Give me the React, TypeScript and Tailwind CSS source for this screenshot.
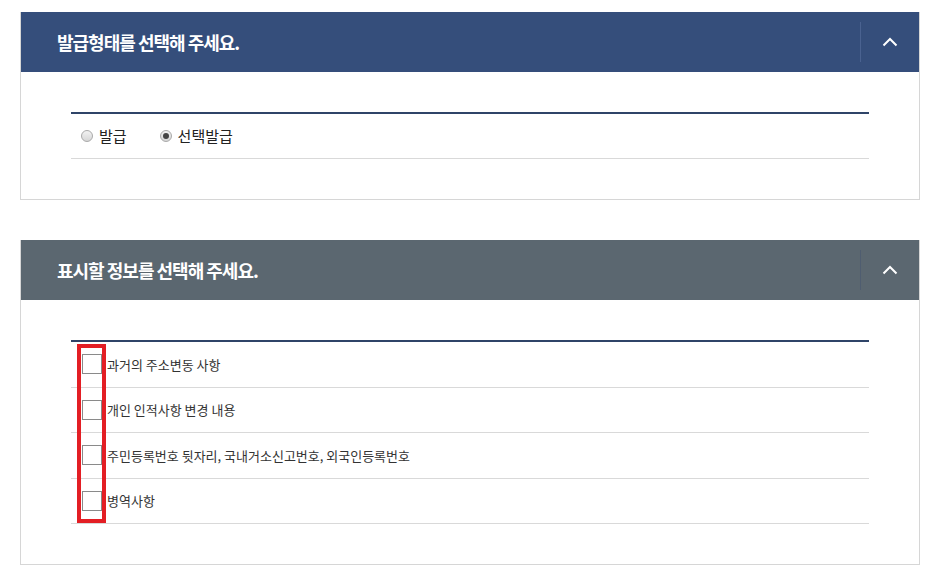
import { useState } from "react";

const font = { fontFamily: '"Noto Sans CJK KR", "Noto Sans", sans-serif' };

function Chevron() {
  return (
    <svg width="16" height="10" viewBox="0 0 16 10" fill="none">
      <path d="M1.5 8.5 L8 2 L14.5 8.5" stroke="white" strokeWidth="2" />
    </svg>
  );
}

function PanelHeader({ title, tone }: { title: string; tone: "navy" | "gray" }) {
  const bg = tone === "navy" ? "bg-[#354e7b]" : "bg-[#5b6770]";
  const line = tone === "navy" ? "bg-[#4a6290]" : "bg-[#4f5d70]";
  return (
    <div className={`flex h-[60px] items-center ${bg}`}>
      <h2 className="flex-1 pl-9 text-[18px] font-bold tracking-[-1px] text-white">{title}</h2>
      <div className={`h-[40px] w-px ${line}`} />
      <button className="flex h-full w-[58px] items-center justify-center">
        <Chevron />
      </button>
    </div>
  );
}

function Radio({ label, checked, onClick }: { label: string; checked: boolean; onClick: () => void }) {
  return (
    <label className="flex cursor-pointer items-center gap-[6px]" onClick={onClick}>
      <span className="flex h-[12px] w-[12px] items-center justify-center rounded-full border border-[#a9a9a9] bg-gradient-to-b from-[#f2f2f2] to-[#d6d6d6]">
        {checked && <span className="h-[6px] w-[6px] rounded-full bg-[#444]" />}
      </span>
      <span className="text-[15px] text-[#222]">{label}</span>
    </label>
  );
}

const infoItems = [
  "과거의 주소변동 사항",
  "개인 인적사항 변경 내용",
  "주민등록번호 뒷자리, 국내거소신고번호, 외국인등록번호",
  "병역사항",
];

export default function App() {
  const [mode, setMode] = useState("select");
  const [checked, setChecked] = useState<boolean[]>([false, false, false, false]);

  return (
    <div className="min-h-screen bg-white px-5 pt-3" style={font}>
      <div className="flex w-[900px] flex-col gap-10">
        <section className="border border-t-0 border-[#d6d6d6]">
          <PanelHeader title="발급형태를 선택해 주세요." tone="navy" />
          <div className="px-[50px] py-10">
            <div className="flex h-[47px] items-center gap-[33px] border-t-2 border-b border-t-[#2f4468] border-b-[#d9d9d9] pl-[10px]">
              <Radio label="발급" checked={mode === "issue"} onClick={() => setMode("issue")} />
              <Radio label="선택발급" checked={mode === "select"} onClick={() => setMode("select")} />
            </div>
          </div>
        </section>

        <section className="border border-t-0 border-[#d6d6d6]">
          <PanelHeader title="표시할 정보를 선택해 주세요." tone="gray" />
          <div className="px-[50px] py-10">
            <ul className="relative border-t-2 border-[#2f4468]">
              {infoItems.map((item, i) => (
                <li key={i} className="flex h-[45.5px] items-center border-b border-[#d9d9d9] pl-[11px]">
                  <button
                    onClick={() => setChecked(checked.map((c, j) => (j === i ? !c : c)))}
                    className="flex h-[20px] w-[20px] items-center justify-center border border-[#8a8a8a] bg-white text-[12px] leading-none"
                  >
                    {checked[i] ? "✓" : ""}
                  </button>
                  <span className="pl-[5px] text-[13px] text-[#333]">{item}</span>
                </li>
              ))}
              <div className="pointer-events-none absolute top-[2px] left-[6px] h-[179px] w-[29px] border-4 border-[#e31e24]" />
            </ul>
          </div>
        </section>
      </div>
    </div>
  );
}
